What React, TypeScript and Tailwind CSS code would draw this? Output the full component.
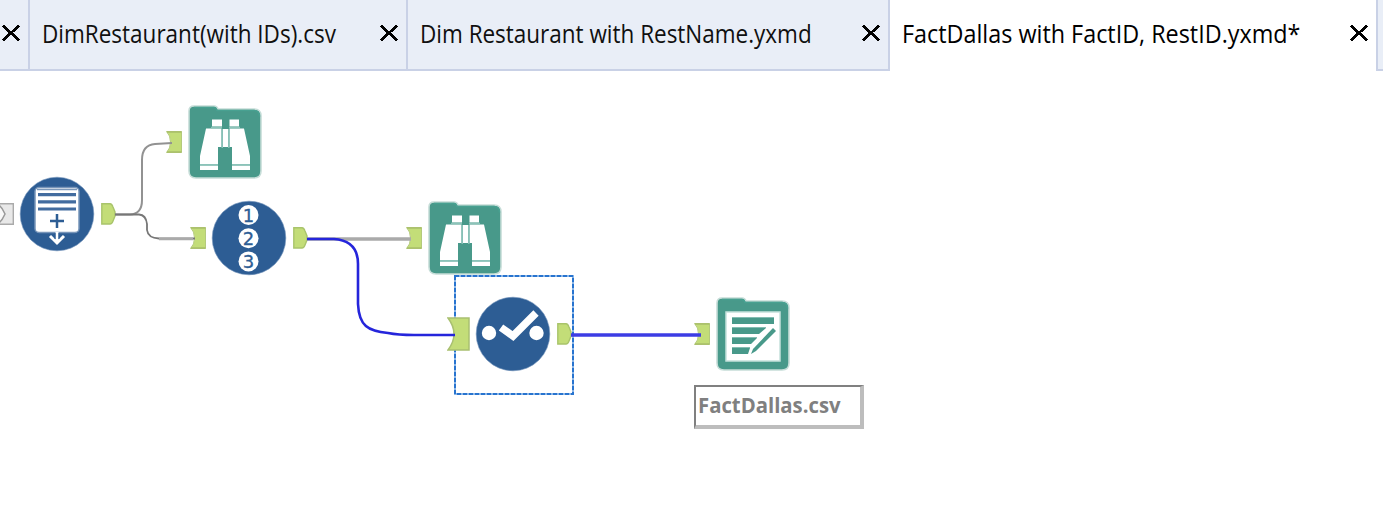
import type { ReactNode } from "react";

const font = "font-['Open_Sans','Noto_Sans',sans-serif]";

function CloseIcon() {
  return (
    <svg width="18" height="16" viewBox="0 0 18 16" className="block shrink-0" shapeRendering="crispEdges">
      <path d="M1 0.5 17 15.5M17 0.5 1 15.5" stroke="#000" strokeWidth="2.7" />
    </svg>
  );
}

function Tab({ title, className, textClass }: { title: string; className: string; textClass: string }) {
  return (
    <div className={`flex h-full shrink-0 items-center justify-between border-r-2 border-[#c9d1e6] pr-2 pl-3 ${className}`}>
      <div className={`origin-left whitespace-nowrap text-[25px] leading-[34px] ${textClass}`}>{title}</div>
      <CloseIcon />
    </div>
  );
}

function Place({ className, children }: { className: string; children: ReactNode }) {
  return <div className={`absolute ${className}`}>{children}</div>;
}

function InAnchor() {
  return (
    <svg width="16" height="22" viewBox="0 0 16 22" className="block">
      <path d="M.5.5h15v21H.5q4-4 4-10.500t-4-10.500z" fill="#c3dd78" stroke="#b4ca7c" />
      <path d="M1 1h14.500M1 21h14.500" stroke="#a9bf6a" strokeWidth="1.500" />
    </svg>
  );
}

function OutAnchor() {
  return (
    <svg width="15" height="22" viewBox="0 0 15 22" className="block">
      <path d="M.8.8H9Q11 1 12 4l2 5v4l-2 5q-1 3-3 3H.8z" fill="#c3dd78" stroke="#a9c46b" strokeWidth="1.400" />
    </svg>
  );
}

function Folder({ children }: { children: ReactNode }) {
  return (
    <svg width="74" height="75" viewBox="0 0 74 75" className="block">
      <path d="M6 1h20q3 0 4 3h36q7 0 7 7v55q0 7-7 7H8q-7 0-7-7V6q0-5 5-5z" fill="#48998a" stroke="#c6ddd8" strokeWidth="1.600" />
      <path d="M6 2.500h20q2 0 3 3h37q5.500 0 5.500 6" fill="none" stroke="#48a191" strokeWidth="1.500" />
      {children}
    </svg>
  );
}

function Browse() {
  return (
    <Folder>
      <g fill="#fff">
        <path d="M24 14.500h10v7H24zM41.500 14.500h9.500v7h-9.500z" />
        <path d="M18 23.500h15.500V42H30v17H12v-8zM41.500 23.500H56L62 51v8H44V42h-2.500z" />
        <path d="M12 60.500h18v4.500H12zM44 60.500h18v4.500H44z" />
        <path d="M35 24h5v18h-5z" />
      </g>
      <path d="M23 22.500h11M41 22.500h11M12 59.800h18M44 59.800h18M34.200 24v19M40.800 24v19" stroke="#8bc3b9" strokeWidth="1.500" />
    </Folder>
  );
}

function Output() {
  return (
    <Folder>
      <path d="M10 15h54v49H10z" fill="#fff" stroke="#c5e1dc" strokeWidth="1.500" />
      <g fill="#48998a">
        <path d="M16 21h42v6H16zM16 31h34l-7 6H16zM16 41h25l-6 6H16zM16 51h18l-2 6H16z" />
        <path d="M35 57l2-5 20-21 3 3-20 20z" />
      </g>
      <path d="M16 20.500h42M16 30.500h34M16 40.500h25M16 50.500h18" stroke="#84bcb2" />
    </Folder>
  );
}

function Circle({ children }: { children: ReactNode }) {
  return (
    <svg width="76" height="76" viewBox="0 0 76 76" className="block">
      <circle cx="38" cy="38" r="36.800" fill="#2d5d94" stroke="#6f91b8" strokeWidth=".6" />
      {children}
    </svg>
  );
}

function RecordId() {
  return (
    <Circle>
      {["1", "2", "3"].map((digit, i) => (
        <g key={digit}>
          <circle cx="37.500" cy={15 + i * 23.200} r="10" fill="#fff" />
          <text x="37.500" y={21.500 + i * 23.200} textAnchor="middle" fill="#2d5d94" stroke="#2d5d94" strokeWidth=".3" fontSize="18" fontFamily="DejaVu Sans, sans-serif">{digit}</text>
        </g>
      ))}
    </Circle>
  );
}

function Append() {
  return (
    <Circle>
      <rect x="16" y="11.500" width="44" height="45" rx="4" fill="#fff" stroke="#7795b9" strokeWidth="1.500" />
      <path d="M18 13.500h40" stroke="#7b98ba" strokeWidth="1.500" />
      <path d="M19 18.700h38M19 25.800h38M19 33h38" stroke="#426c9f" strokeWidth="3.200" />
      <path d="M38 38v14M31 45h14" stroke="#2d5d94" strokeWidth="2.500" />
      <path d="M38 56v11M31 60l7 7 7-7" fill="none" stroke="#fff" strokeWidth="3" />
      <path d="M36 57v6M40 57v6" stroke="#2d5d94" />
    </Circle>
  );
}

function Select() {
  return (
    <Circle>
      <circle cx="14" cy="37" r="7.200" fill="#fff" />
      <circle cx="61.500" cy="37" r="7.200" fill="#fff" />
      <path d="M26 31.500 38 40 61 17" fill="none" stroke="#fff" strokeWidth="7.500" />
    </Circle>
  );
}

function Connections() {
  return (
    <svg width="1383" height="461" viewBox="0 71 1383 461" className="block" fill="none">
      <path d="M115 214.500H130Q142 214 142 200V160Q142 145 155 144L172 143" stroke="#929292" strokeWidth="2" />
      <path d="M115 214.500H139Q146 215 147 224V230Q148 238 159 238.500H195" stroke="#777" strokeWidth="1.800" />
      <path d="M159 239H193" stroke="#aaa" strokeWidth="2.500" />
      <path d="M307 239H411" stroke="#aaa" strokeWidth="3.300" />
      <path d="M307 239H334C348 240 358 247 358 264V304C359 326 368 331 388 333Q398 335 414 335H455" stroke="#2525db" strokeWidth="2.600" />
      <path d="M571 335H701" stroke="#3c3ce4" strokeWidth="3.300" />
    </svg>
  );
}

export default function App() {
  return (
    <div className={`flex h-[532px] w-[1383px] flex-col overflow-hidden bg-white text-[#101010] ${font}`}>
      <header className="flex h-[71px] shrink-0">
        <div className="flex w-[30px] shrink-0 items-center border-r-2 border-b-2 border-[#c9d1e6] bg-[#e9eef7] pb-[3px] pl-0.5">
          <CloseIcon />
        </div>
        <Tab title="DimRestaurant(with IDs).csv" className="w-[378px] border-b-2 bg-[#e9eef7] pb-[3px]" textClass="w-[294px] scale-x-[0.9]" />
        <Tab title="Dim Restaurant with RestName.yxmd" className="w-[482px] border-b-2 bg-[#e9eef7] pb-[3px]" textClass="w-[391px] scale-x-[0.899]" />
        <Tab title="FactDallas with FactID, RestID.yxmd*" className="w-[488px] bg-white pb-[5px] text-black" textClass="w-[397px] scale-x-[0.934]" />
        <div className="flex-1 border-b-2 border-[#c9d1e6] bg-[#e9eef7]" />
      </header>
      <main className="relative flex-1">
        <Place className="top-[132px] left-0">
          <svg width="15" height="22" viewBox="0 0 15 22" className="block">
            <path d="M-1 .8h14.300v20.400H-1" fill="#e8e8e8" stroke="#aaa" strokeWidth="1.400" />
            <path d="M-1 2 2 5.500l3 5.500-3 5.500-3 3.500" fill="#f8f8f8" stroke="#999" strokeWidth="1.500" />
          </svg>
        </Place>
        <Place className="top-[105px] left-[19px]"><Append /></Place>
        <Place className="top-[132px] left-[101px]"><OutAnchor /></Place>
        <Place className="top-[60px] left-[166px]"><InAnchor /></Place>
        <Place className="top-[34px] left-[188px]"><Browse /></Place>
        <Place className="top-[156px] left-[190px]"><InAnchor /></Place>
        <Place className="top-[129px] left-[211px]"><RecordId /></Place>
        <Place className="top-[156px] left-[293px]"><OutAnchor /></Place>
        <Place className="top-[156px] left-[406px]"><InAnchor /></Place>
        <Place className="top-[130px] left-[428px]"><Browse /></Place>
        <Place className="top-[204px] left-[454px]">
          <svg width="120" height="120" className="block" shapeRendering="crispEdges">
            <rect x="1" y="1" width="118" height="118" fill="none" stroke="#8ab5e7" strokeWidth="2" />
            <rect x="1" y="1" width="118" height="118" fill="none" stroke="#2874cf" strokeWidth="2" strokeDasharray="4 2" />
          </svg>
        </Place>
        <Place className="top-[246px] left-[447px]">
          <svg width="23" height="34" viewBox="0 0 23 34" className="block">
            <path d="M1 1h21v32H1q6-8 6-16T1 1z" fill="#c3dd78" stroke="#a9c070" strokeWidth="1.500" />
          </svg>
        </Place>
        <Place className="top-[225px] left-[475px]"><Select /></Place>
        <Place className="top-[252px] left-[557px]"><OutAnchor /></Place>
        <Place className="top-[252px] left-[694px]"><InAnchor /></Place>
        <Place className="top-[226px] left-[716px]"><Output /></Place>
        <Place className="top-0 left-0"><Connections /></Place>
        <Place className="top-[314px] left-[694px]">
          <div className="h-[44px] w-[170px] border-2 border-r-4 border-b-4 border-t-[#808080] border-r-[#bdbdbd] border-b-[#bdbdbd] border-l-[#808080] bg-white pl-0.5">
            <div className="origin-left scale-x-[0.923] text-[22px] leading-[34px] font-bold whitespace-nowrap text-[#808080]">FactDallas.csv</div>
          </div>
        </Place>
      </main>
    </div>
  );
}
